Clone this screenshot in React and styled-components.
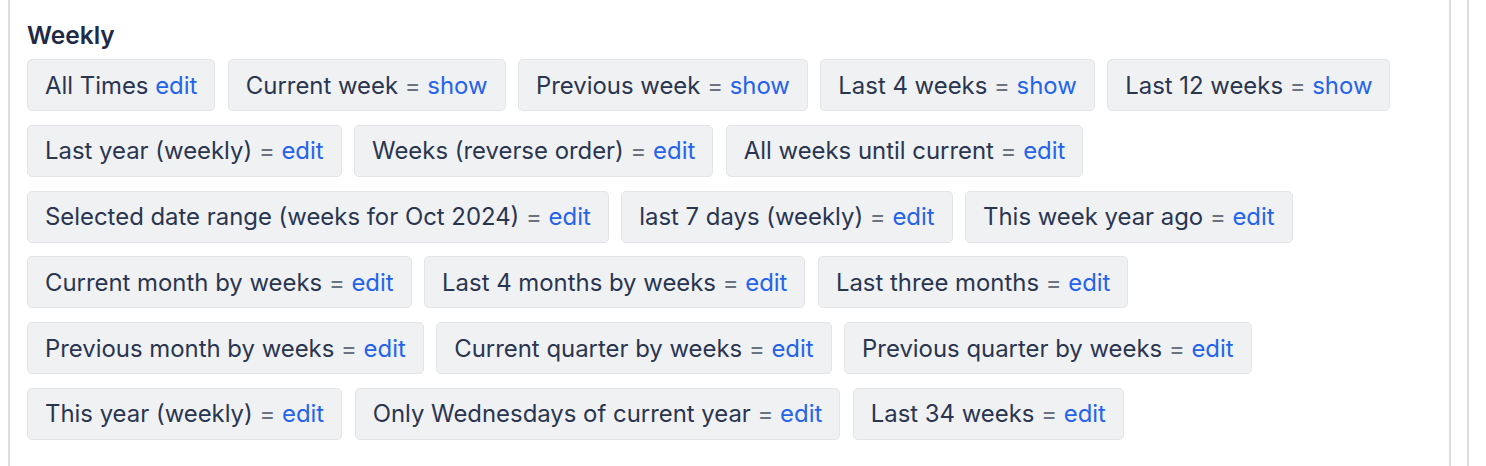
import React from "react";
import styled, { createGlobalStyle } from "styled-components";

const Global = createGlobalStyle`
  html, body { margin: 0; padding: 0; background: #ffffff; }
  body { font-family: Inter, "Noto Sans", "Liberation Sans", sans-serif; }
`;

const Page = styled.div`
  display: flex;
  height: 466px;
  padding-left: 8px;
  box-sizing: border-box;
  overflow: hidden;
`;

const Panel = styled.section`
  width: 1443px;
  box-sizing: border-box;
  border-left: 2px solid #dcdde0;
  border-right: 2px solid #dcdde0;
  padding: 19px 0 0 17px;
`;

const Side = styled.div`
  margin-left: 16px;
  border-left: 2px solid #dcdde0;
  flex: 1;
`;

const Title = styled.h3`
  margin: 0 0 8px 0;
  font-size: 24.5px;
  line-height: 32px;
  font-weight: 600;
  color: #1e2a46;
  letter-spacing: 0;
`;

const ChipList = styled.div`
  display: flex;
  flex-wrap: wrap;
  column-gap: 12.5px;
  row-gap: 13.8px;
  max-width: 1400px;
`;

const Chip = styled.div`
  box-sizing: border-box;
  height: 52px;
  display: flex;
  align-items: center;
  padding: 0 17px 0 17px;
  background: #f0f1f3;
  border: 1.5px solid #e2e4e8;
  border-radius: 5px;
  font-size: 23.9px;
  color: #2a3550;
  white-space: pre;
`;

const Eq = styled.span`
  color: #6b7280;
`;

const Link = styled.a`
  color: #2563eb;
  text-decoration: none;
  cursor: pointer;
`;

const items = [
  ["All Times", "edit", false],
  ["Current week", "show", true],
  ["Previous week", "show", true],
  ["Last 4 weeks", "show", true],
  ["Last 12 weeks", "show", true],
  ["Last year (weekly)", "edit", true],
  ["Weeks (reverse order)", "edit", true],
  ["All weeks until current", "edit", true],
  ["Selected date range (weeks for Oct 2024)", "edit", true],
  ["last 7 days (weekly)", "edit", true],
  ["This week year ago", "edit", true],
  ["Current month by weeks", "edit", true],
  ["Last 4 months by weeks", "edit", true],
  ["Last three months", "edit", true],
  ["Previous month by weeks", "edit", true],
  ["Current quarter by weeks", "edit", true],
  ["Previous quarter by weeks", "edit", true],
  ["This year (weekly)", "edit", true],
  ["Only Wednesdays of current year", "edit", true],
  ["Last 34 weeks", "edit", true],
];

export default function App() {
  return (
    <>
      <Global />
      <Page>
        <Panel>
          <Title>Weekly</Title>
          <ChipList>
            {items.map(([label, action, eq]) => (
              <Chip key={label}>
                {label}
                {eq ? <Eq>{" = "}</Eq> : " "}
                <Link>{action}</Link>
              </Chip>
            ))}
          </ChipList>
        </Panel>
        <Side />
      </Page>
    </>
  );
}
